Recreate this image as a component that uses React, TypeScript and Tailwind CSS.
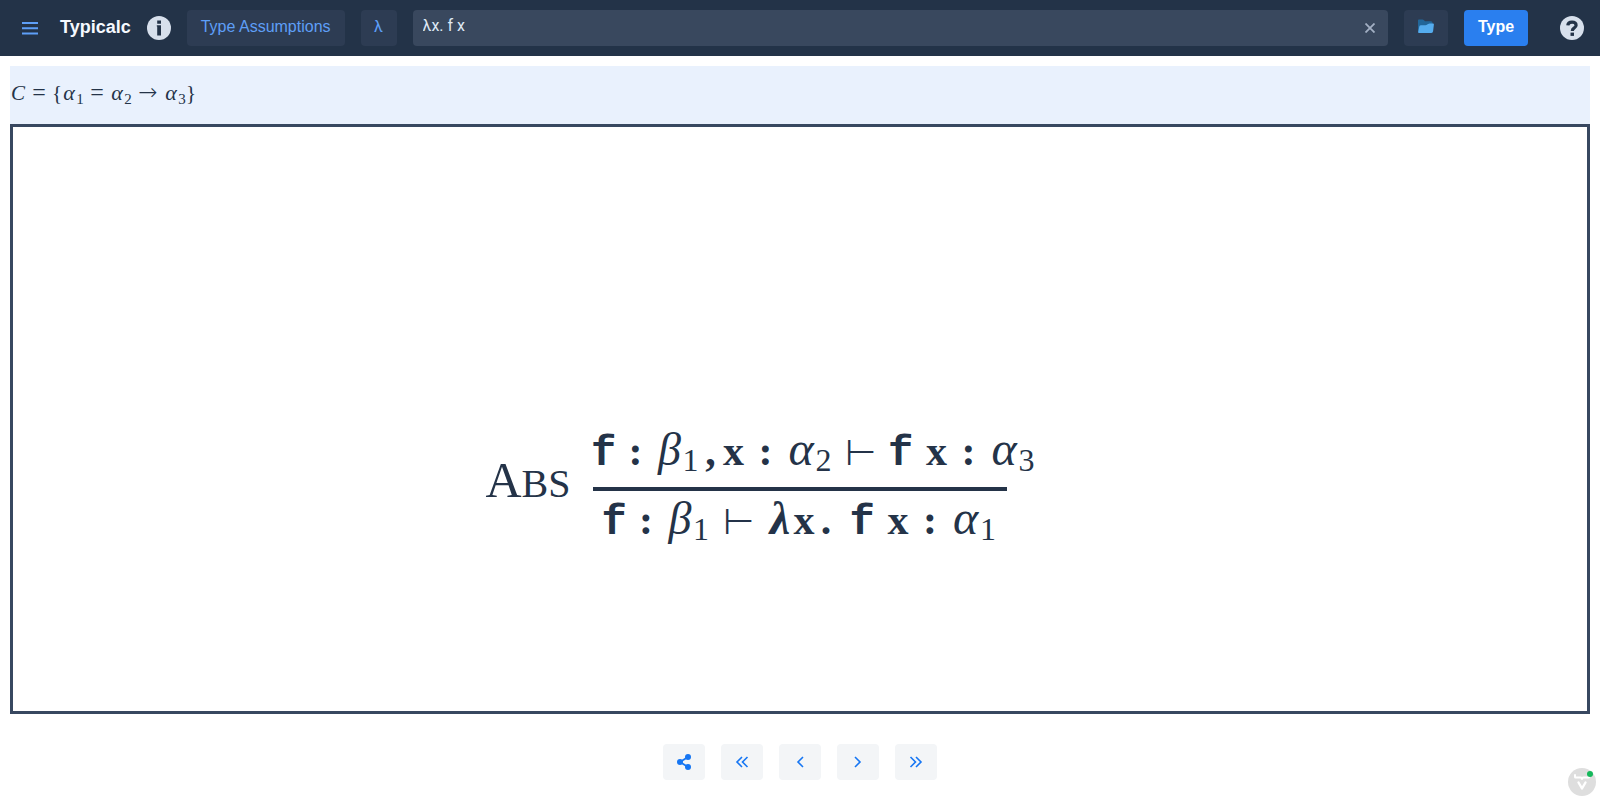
import React, { useState } from "react";

type Kind =
  | "f" | "tt" | "colon" | "beta" | "alpha" | "sub" | "comma" | "turnstile" | "lambda" | "space"
  | "C" | "eq" | "brace" | "arrow" | "smallAlpha" | "smallSub";

const kinds: Record<Kind, string> = {
  f: "w-[22px] font-['Liberation_Mono',monospace] text-[42px] font-bold",
  tt: "w-[22px] font-['Liberation_Serif',serif] text-[42px] font-bold",
  colon: "w-[42px] font-['Liberation_Serif',serif] text-[42px] font-bold",
  beta: "w-[26px] font-['Liberation_Serif',serif] text-[46px] italic",
  alpha: "w-[29px] font-['Liberation_Serif',serif] text-[48px] italic",
  sub: "w-[16px] translate-y-1.5 font-['Liberation_Serif',serif] text-[32px]",
  comma: "w-[24px] font-['Liberation_Serif',serif] text-[42px] font-bold",
  turnstile: "w-[58px] font-['DejaVu_Sans',sans-serif] text-[36px] font-extralight",
  lambda: "w-[26px] font-['Liberation_Serif',serif] text-[46px] font-bold italic",
  space: "w-[14px]",
  C: "w-[16px] font-['Liberation_Serif',serif] text-[21px] italic",
  eq: "w-[26px] font-['Liberation_Serif',serif] text-[24px]",
  brace: "w-[10px] font-['Liberation_Serif',serif] text-[21px]",
  arrow: "w-[32px] font-['DejaVu_Sans',sans-serif] text-[23px] font-extralight",
  smallAlpha: "w-[14px] font-['Liberation_Serif',serif] text-[22px] italic",
  smallSub: "w-[8px] translate-y-1 font-['Liberation_Serif',serif] text-[15px]",
};

type Token = [Kind, string];

const constraint: Token[] = [
  ["C", "C"], ["eq", "="], ["brace", "{"], ["smallAlpha", "α"], ["smallSub", "1"], ["eq", "="],
  ["smallAlpha", "α"], ["smallSub", "2"], ["arrow", "→"], ["smallAlpha", "α"], ["smallSub", "3"], ["brace", "}"],
];

const premise: Token[] = [
  ["f", "f"], ["colon", ":"], ["beta", "β"], ["sub", "1"], ["comma", ","], ["tt", "x"], ["colon", ":"],
  ["alpha", "α"], ["sub", "2"], ["turnstile", "⊢"], ["f", "f"], ["space", " "], ["tt", "x"],
  ["colon", ":"], ["alpha", "α"], ["sub", "3"],
];

const conclusion: Token[] = [
  ["f", "f"], ["colon", ":"], ["beta", "β"], ["sub", "1"], ["turnstile", "⊢"], ["lambda", "λ"], ["tt", "x"],
  ["tt", "."], ["space", " "], ["f", "f"], ["space", " "], ["tt", "x"], ["colon", ":"], ["alpha", "α"], ["sub", "1"],
];

function Formula({ tokens, className }: { tokens: Token[]; className: string }) {
  return (
    <div className={`flex items-baseline whitespace-pre ${className}`}>
      {tokens.map(([kind, text], i) => (
        <span key={i} className={`flex shrink-0 justify-center ${kinds[kind]}`}>{text}</span>
      ))}
    </div>
  );
}

function NavButton({ label, children }: { label: string; children: React.ReactNode }) {
  return (
    <button aria-label={label} className="flex h-9 w-[42px] items-center justify-center rounded bg-[#f3f5f7] text-[#1676f3]">
      {children}
    </button>
  );
}

function Chevrons({ d }: { d: string }) {
  return (
    <svg width="14" height="14" viewBox="0 0 14 14" fill="none" stroke="currentColor" strokeWidth="1.6">
      <path d={d} />
    </svg>
  );
}

export default function App() {
  const [term, setTerm] = useState("λx. f x");
  return (
    <div className="flex min-h-screen flex-col bg-white font-['Roboto',sans-serif] text-base text-[#243348]">
      <header className="flex h-14 items-center bg-[#233348] pr-4 pl-[22px]">
        <button aria-label="Menu" className="flex text-[#5e9ff8]">
          <svg width="16" height="14" viewBox="0 0 16 14" fill="currentColor">
            <path d="M0 1h16v2H0zM0 6.300h16v2H0zM0 11.500h16v2H0z" />
          </svg>
        </button>
        <h1 className="ml-[22px] pb-0.5 font-['Liberation_Sans',sans-serif] text-lg leading-6 font-bold text-[#f5f9ff]">Typicalc</h1>
        <button aria-label="About" className="ml-4">
          <svg width="24" height="24" viewBox="0 0 24 24">
            <circle cx="12" cy="12" r="12" fill="#d7e0ec" />
            <path d="M10.200 4.500h3.800v3.200h-3.800zM9.800 9.200h4.200v10.400h-3.800v-9h-.4z" fill="#233348" />
          </svg>
        </button>
        <button className="ml-4 h-9 rounded bg-[#2d3c53] px-[14px] pb-0.5 font-['Liberation_Sans',sans-serif] text-[#5e9ff8]">Type Assumptions</button>
        <button aria-label="Insert lambda" className="ml-4 h-9 w-9 rounded bg-[#2d3c53] pb-0.5 text-[#5e9ff8]">λ</button>
        <div className="ml-4 flex h-9 min-w-0 flex-1 items-center rounded bg-[#39485e] pr-[13px] pl-[10px]">
          <input aria-label="Term" value={term} onChange={(e) => setTerm(e.target.value)} className="min-w-0 flex-1 bg-transparent pb-1 text-[#dfe8f5] outline-none" />
          <button aria-label="Clear" className="text-[#a3b0c4]" onClick={() => setTerm("")}>
            <svg width="10" height="10" viewBox="0 0 10 10" stroke="currentColor" strokeWidth="1.8"><path d="M0.500 0.500l9 9M9.500 0.500l-9 9" /></svg>
          </button>
        </div>
        <button aria-label="Examples" className="ml-4 flex h-9 w-11 items-center justify-center rounded bg-[#2d3c53] pb-1">
          <svg width="16" height="14" viewBox="0 0 16 14">
            <path d="M0 13V1.300Q0 .5.8.5h3.700q.8 0 1.500.8l1 .9h6q1.500 0 1.500 1.500V5L2 13z" fill="#226699" />
            <path d="M.8 14Q0 14 .2 13L1.300 7.500Q1.600 6.300 3 6.300h4.500q1 0 1.700-.8l.9-.6q.6-.4 1.500-.4H15q1 0 .9 1l-.8 6.800q-.2 1.700-1.700 1.700z" fill="#55acee" />
          </svg>
        </button>
        <button className="ml-4 h-9 w-16 rounded bg-[#2a7fef] pb-0.5 font-['Liberation_Sans',sans-serif] font-bold text-white">Type</button>
        <button aria-label="Help" className="ml-8">
          <svg width="24" height="24" viewBox="0 0 24 24">
            <circle cx="12" cy="12" r="12" fill="#d7e0ec" />
            <path d="M7.800 9.400Q8 6.200 12 6.200t4.100 3q0 1.500-2.100 2.900-1.700 1.100-1.700 2.900" fill="none" stroke="#233348" strokeWidth="3.200" />
            <path d="M10.500 16.600h3.500v3.300h-3.500z" fill="#233348" />
          </svg>
        </button>
      </header>

      <main className="flex flex-1 flex-col px-[10px] pt-[10px]">
        <section aria-label="Constraints" className="h-[58px] bg-[#e9f1fd] pt-2.5">
          <Formula tokens={constraint} className="h-8 leading-8" />
        </section>
        <section aria-label="Proof tree" className="flex min-h-[590px] items-center justify-center border-[3px] border-[#384860] pt-[122px] pr-[108px]">
          <div className="flex items-center">
            <div className="mr-[22px] flex items-baseline pt-1 font-['Liberation_Serif',serif] leading-[60px]">
              <span className="text-[50px]">A</span>
              <span className="text-[40px]">BS</span>
            </div>
            <div className="flex w-[414px] flex-col">
              <Formula tokens={premise} className="h-[71px] leading-[66px]" />
              <div className="h-1 bg-[#243348]" />
              <Formula tokens={conclusion} className="h-[54px] justify-center leading-[54px]" />
            </div>
          </div>
        </section>
        <nav aria-label="Steps" className="flex justify-center gap-4 pt-[30px] pb-5">
          <NavButton label="Share">
            <svg width="16" height="16" viewBox="0 0 16 16" fill="currentColor">
              <path d="M4 8l8-5M4 8l8 5" stroke="currentColor" strokeWidth="1.800" />
              <circle cx="4" cy="8" r="3" /><circle cx="12" cy="3" r="3" /><circle cx="12" cy="13" r="3" />
            </svg>
          </NavButton>
          <NavButton label="First step"><Chevrons d="M7 2L2 7l5 5M12.500 2l-5 5 5 5" /></NavButton>
          <NavButton label="Previous step"><Chevrons d="M10 2L5 7l5 5" /></NavButton>
          <NavButton label="Next step"><Chevrons d="M4 2l5 5-5 5" /></NavButton>
          <NavButton label="Last step"><Chevrons d="M1.500 2l5 5-5 5M7 2l5 5-5 5" /></NavButton>
        </nav>
      </main>

      <button aria-label="Development tools" className="fixed right-1 bottom-1">
        <svg width="28" height="28" viewBox="0 0 28 28">
          <circle cx="14" cy="14" r="14" fill="#dedede" />
          <path d="M7 7v2q0 .5.500.5h5q1.500 0 1.500 1.500 0-1.500 1.500-1.500h5q.5 0 .5-.5V8" fill="none" stroke="#fff" strokeWidth="2" strokeLinecap="round" strokeLinejoin="round" />
          <path d="M10.500 14.500l3.500 6 3.500-6" fill="none" stroke="#fff" strokeWidth="2.400" strokeLinecap="round" strokeLinejoin="round" />
          <circle cx="22" cy="6" r="3" fill="#15b85b" />
        </svg>
      </button>
    </div>
  );
}
